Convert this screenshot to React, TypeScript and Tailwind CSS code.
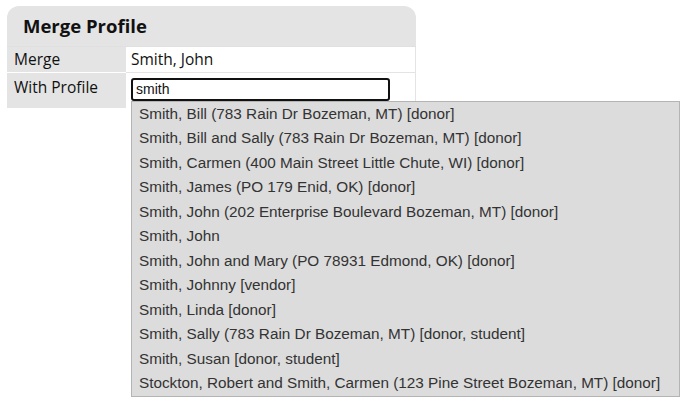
import React from "react";

const MATCHES = [
  "Smith, Bill (783 Rain Dr Bozeman, MT) [donor]",
  "Smith, Bill and Sally (783 Rain Dr Bozeman, MT) [donor]",
  "Smith, Carmen (400 Main Street Little Chute, WI) [donor]",
  "Smith, James (PO 179 Enid, OK) [donor]",
  "Smith, John (202 Enterprise Boulevard Bozeman, MT) [donor]",
  "Smith, John",
  "Smith, John and Mary (PO 78931 Edmond, OK) [donor]",
  "Smith, Johnny [vendor]",
  "Smith, Linda [donor]",
  "Smith, Sally (783 Rain Dr Bozeman, MT) [donor, student]",
  "Smith, Susan [donor, student]",
  "Stockton, Robert and Smith, Carmen (123 Pine Street Bozeman, MT) [donor]",
];

export default function App() {
  return (
    <div className="w-[688px] h-[402px] bg-white overflow-hidden pt-[6px] pl-[7px] font-[family-name:'Open_Sans',sans-serif] text-[#111]">
      <div className="w-[409px] rounded-t-[12px] bg-[#e4e4e4]">
        <h2 className="h-[40px] pl-[16px] flex items-center text-[18.5px] font-bold text-[#111]">
          Merge Profile
        </h2>
        <div className="grid grid-cols-[119px_1fr] border-t border-[#e0e0e0] text-[15.5px]">
          <div className="h-[26px] pl-[7px] flex items-center border-b border-white">
            Merge
          </div>
          <div className="h-[26px] pl-[5px] flex items-center bg-white border-b border-[#e4e4e4] border-r">
            Smith, John
          </div>
          <div className="h-[35px] pl-[7px] pt-[3px]">With Profile</div>
          <div className="relative h-[35px] bg-white border-r border-[#e4e4e4] pl-[5px] pt-[5px]">
            <div className="w-[259px] h-[23px] border-2 border-[#111] rounded-[3px] pl-[3px] flex items-center text-[14px] font-[family-name:'Liberation_Sans',Arial,sans-serif]">
              smith
            </div>
            <ul className="absolute left-[5px] top-[28px] w-[549px] bg-[#dcdcdc] border border-[#b4b4b4] font-[family-name:'Liberation_Sans',Arial,sans-serif] text-[15.3px] text-[#333]">
              {MATCHES.map((m, i) => (
                <li key={i} className="h-[24.5px] flex items-center pl-[7px] whitespace-nowrap">
                  {m}
                </li>
              ))}
            </ul>
          </div>
        </div>
      </div>
    </div>
  );
}
